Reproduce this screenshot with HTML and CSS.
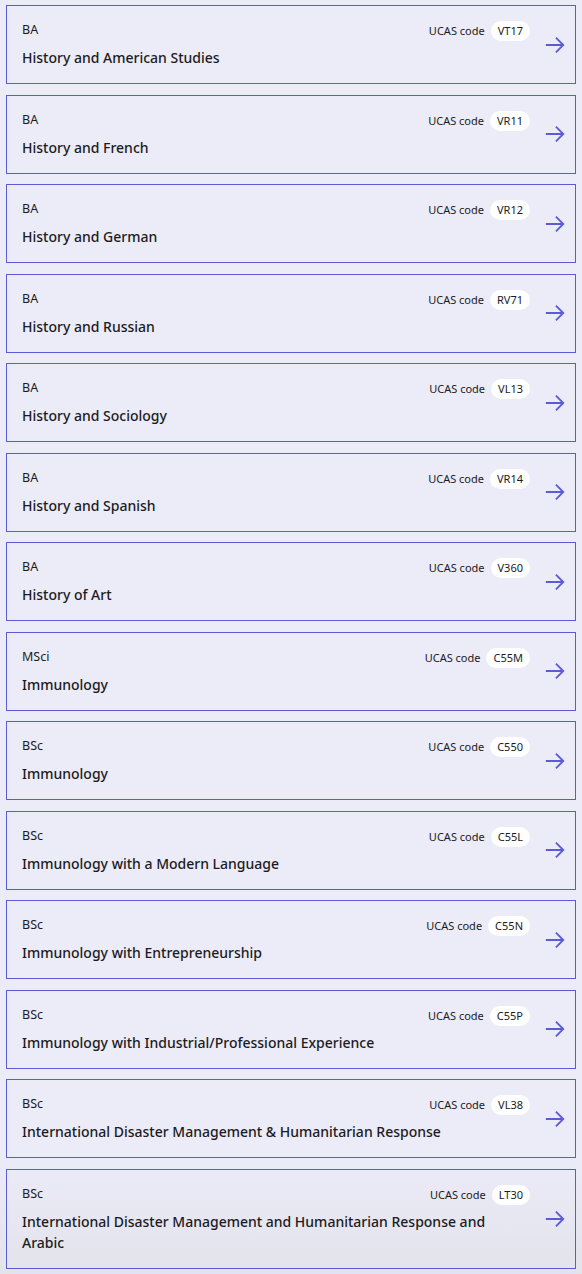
FILE: index.html
```html
<!DOCTYPE html>
<html lang="en-gb">

<head>
	<meta charset="utf-8">
	<meta name="viewport" content="width=device-width, initial-scale=1">
	<title>Courses</title>
	<link rel="stylesheet" href="styles.css">
</head>

<body>
	<ul class="courses">
		<li class="course">
			<div class="info">
				<p class="degree">BA</p>
				<p class="meta">UCAS code <span class="code">VT17</span></p>
				<h3 class="title">History and American Studies</h3>
			</div>
			<svg class="arrow" viewBox="0 0 24 24"><path d="M2 12h19M13 4l8 8-8 8"/></svg>
		</li>
		<li class="course">
			<div class="info">
				<p class="degree">BA</p>
				<p class="meta">UCAS code <span class="code">VR11</span></p>
				<h3 class="title">History and French</h3>
			</div>
			<svg class="arrow" viewBox="0 0 24 24"><path d="M2 12h19M13 4l8 8-8 8"/></svg>
		</li>
		<li class="course">
			<div class="info">
				<p class="degree">BA</p>
				<p class="meta">UCAS code <span class="code">VR12</span></p>
				<h3 class="title">History and German</h3>
			</div>
			<svg class="arrow" viewBox="0 0 24 24"><path d="M2 12h19M13 4l8 8-8 8"/></svg>
		</li>
		<li class="course">
			<div class="info">
				<p class="degree">BA</p>
				<p class="meta">UCAS code <span class="code">RV71</span></p>
				<h3 class="title">History and Russian</h3>
			</div>
			<svg class="arrow" viewBox="0 0 24 24"><path d="M2 12h19M13 4l8 8-8 8"/></svg>
		</li>
		<li class="course">
			<div class="info">
				<p class="degree">BA</p>
				<p class="meta">UCAS code <span class="code">VL13</span></p>
				<h3 class="title">History and Sociology</h3>
			</div>
			<svg class="arrow" viewBox="0 0 24 24"><path d="M2 12h19M13 4l8 8-8 8"/></svg>
		</li>
		<li class="course">
			<div class="info">
				<p class="degree">BA</p>
				<p class="meta">UCAS code <span class="code">VR14</span></p>
				<h3 class="title">History and Spanish</h3>
			</div>
			<svg class="arrow" viewBox="0 0 24 24"><path d="M2 12h19M13 4l8 8-8 8"/></svg>
		</li>
		<li class="course">
			<div class="info">
				<p class="degree">BA</p>
				<p class="meta">UCAS code <span class="code">V360</span></p>
				<h3 class="title">History of Art</h3>
			</div>
			<svg class="arrow" viewBox="0 0 24 24"><path d="M2 12h19M13 4l8 8-8 8"/></svg>
		</li>
		<li class="course">
			<div class="info">
				<p class="degree">MSci</p>
				<p class="meta">UCAS code <span class="code">C55M</span></p>
				<h3 class="title">Immunology</h3>
			</div>
			<svg class="arrow" viewBox="0 0 24 24"><path d="M2 12h19M13 4l8 8-8 8"/></svg>
		</li>
		<li class="course">
			<div class="info">
				<p class="degree">BSc</p>
				<p class="meta">UCAS code <span class="code">C550</span></p>
				<h3 class="title">Immunology</h3>
			</div>
			<svg class="arrow" viewBox="0 0 24 24"><path d="M2 12h19M13 4l8 8-8 8"/></svg>
		</li>
		<li class="course">
			<div class="info">
				<p class="degree">BSc</p>
				<p class="meta">UCAS code <span class="code">C55L</span></p>
				<h3 class="title">Immunology with a Modern Language</h3>
			</div>
			<svg class="arrow" viewBox="0 0 24 24"><path d="M2 12h19M13 4l8 8-8 8"/></svg>
		</li>
		<li class="course">
			<div class="info">
				<p class="degree">BSc</p>
				<p class="meta">UCAS code <span class="code">C55N</span></p>
				<h3 class="title">Immunology with Entrepreneurship</h3>
			</div>
			<svg class="arrow" viewBox="0 0 24 24"><path d="M2 12h19M13 4l8 8-8 8"/></svg>
		</li>
		<li class="course">
			<div class="info">
				<p class="degree">BSc</p>
				<p class="meta">UCAS code <span class="code">C55P</span></p>
				<h3 class="title">Immunology with Industrial/Professional Experience</h3>
			</div>
			<svg class="arrow" viewBox="0 0 24 24"><path d="M2 12h19M13 4l8 8-8 8"/></svg>
		</li>
		<li class="course">
			<div class="info">
				<p class="degree">BSc</p>
				<p class="meta">UCAS code <span class="code">VL38</span></p>
				<h3 class="title">International Disaster Management &amp; Humanitarian Response</h3>
			</div>
			<svg class="arrow" viewBox="0 0 24 24"><path d="M2 12h19M13 4l8 8-8 8"/></svg>
		</li>
		<li class="course">
			<div class="info">
				<p class="degree">BSc</p>
				<p class="meta">UCAS code <span class="code">LT30</span></p>
				<h3 class="title">International Disaster Management and Humanitarian Response and Arabic</h3>
			</div>
			<svg class="arrow" viewBox="0 0 24 24"><path d="M2 12h19M13 4l8 8-8 8"/></svg>
		</li>
	</ul>
</body>

</html>
```
FILE: styles.css
```css
html {
	background-color: #ecebf8;
}

body {
	margin: 0;
	min-height: 100vh;
	font-family: "Noto Sans", "Open Sans", sans-serif;
	color: #1b1b22;
	/* soft fade towards the bottom of the list */
	background: linear-gradient(to bottom, #ecebf8 calc(100% - 120px), #e3e3ec 100%);
}

.courses {
	list-style: none;
	margin: 0;
	padding: 5px 6px;
	display: flex;
	flex-direction: column;
	gap: 10.5px;
}

/* One course card */
.course {
	display: flex;
	align-items: center;
	border: 1px solid #5b5bd6;
	padding: 15px 9px 15px 15px;
}

.info {
	flex: 1;
	display: grid;
	grid-template-columns: 1fr auto;
	row-gap: 6px;
}

.degree {
	margin: 0;
	font-size: 12.5px;
	line-height: 18px;
}

.meta {
	margin: 0;
	font-size: 11px;
	line-height: 20px;
	display: flex;
	align-items: center;
	gap: 6px;
}

.code {
	display: inline-block;
	background-color: #fff;
	border-radius: 10px;
	padding: 0 7px;
	line-height: 20px;
}

.title {
	grid-column: 1 / 3;
	margin: 0;
	font-size: 14px;
	font-weight: 500;
	line-height: 21px;
}

.arrow {
	width: 22px;
	height: 22px;
	margin-left: 14px;
	fill: none;
	stroke: #5b5bd6;
	stroke-width: 2;
	flex-shrink: 0;
}
```
